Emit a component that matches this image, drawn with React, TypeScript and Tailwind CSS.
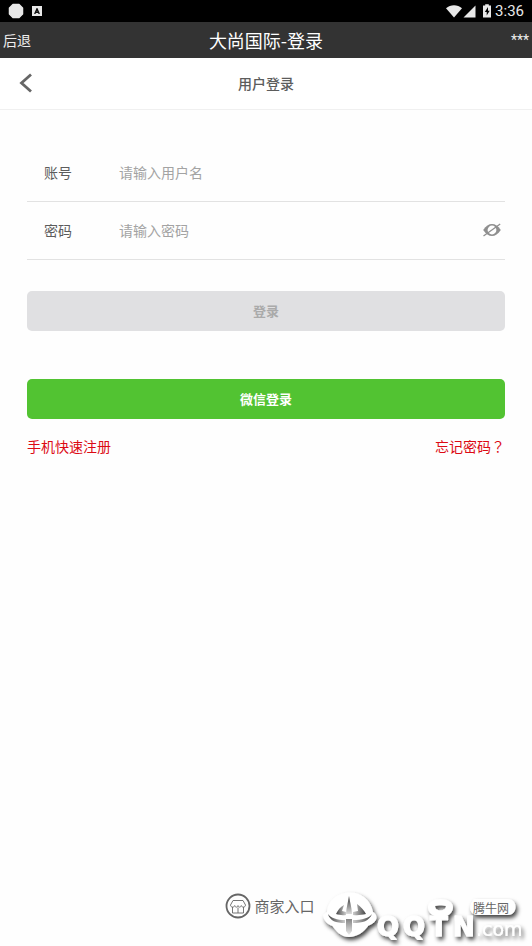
import React, { useState } from 'react';

const StatusBar: React.FC = () => (
  <div className="flex h-[22px] items-center justify-between bg-black px-2 text-[#e8e8e8]">
    <div className="flex items-center gap-2">
      <svg viewBox="0 0 16 16" className="h-4 w-4" fill="#e8e8e8">
        <path d="M5 1.500h6L14.500 5v6L11 14.500H5L1.500 11V5z" stroke="#e8e8e8" strokeWidth="1.500" strokeLinejoin="round" />
      </svg>
      <span className="flex h-[10px] w-[10px] items-center justify-center bg-[#e8e8e8]">
        <svg viewBox="0 0 6 6" className="h-[6px] w-[6px]" fill="none" stroke="#111" strokeWidth="1.400">
          <path d="M.7 6 3 .8 5.300 6M1.500 4.300h3" />
        </svg>
      </span>
    </div>
    <div className="flex items-center gap-1">
      <svg viewBox="0 0 46 14" className="h-[14px] w-[46px]" fill="#e8e8e8">
        <path d="M1 4.300C5.500.3 12.500.3 17 4.300L9 13.500z" />
        <path d="M30.500 1.500v12h-12z" />
        <path d="M38 1.500h2.200V.300h3.600v1.200H46v12h-8z" />
        <path d="M43 3 39.800 8h1.900v3.600l3-4.900h-1.700z" fill="#000" />
      </svg>
      <span className="font-['Roboto',sans-serif] text-[15px] leading-5">3:36</span>
    </div>
  </div>
);

const StoreIcon: React.FC = () => (
  <svg viewBox="0 0 26 26" className="h-[26px] w-[26px]" fill="none" stroke="#666">
    <circle cx="13" cy="13" r="11.500" strokeWidth="1.800" />
    <path d="M8 7.500h10l2.500 4.500c0 2.500-3.500 2.800-4.200.6-.6 2-2.700 2-3.300 0-.6 2-2.700 2-3.300 0-.7 2.200-4.200 1.900-4.200-.6z" strokeWidth=".9" />
    <path d="M7.500 14v6h11v-6M13 14.500V20" strokeWidth=".9" />
  </svg>
);

const EyeOffIcon: React.FC = () => (
  <svg viewBox="0 0 20 14" className="h-[14px] w-5" fill="none" stroke="#8f8f8f">
    <path d="M1.200 7C4 2.800 6.800 1 10 1s6 1.800 8.800 6c-2.800 4.200-5.600 6-8.800 6S4 11.200 1.200 7z" fill="#8f8f8f" stroke="none" />
    <circle cx="10" cy="7" r="4.400" fill="#fefefe" stroke="none" />
    <path d="M1.500 13 18.200 1" strokeWidth="1.300" />
  </svg>
);

const Watermark: React.FC = () => (
  <svg
    viewBox="0 0 220 66"
    className="pointer-events-none absolute bottom-0 right-0 h-[66px] w-[220px]"
    role="img"
    aria-label="QQTN.com"
  >
    <defs>
      <filter id="wm-shadow" x="-10%" y="-10%" width="125%" height="135%">
        <feDropShadow dx="2" dy="3" stdDeviation="2" floodColor="#000" floodOpacity=".75" />
      </filter>
      <linearGradient id="wm-dark" x1="0" y1="0" x2="0" y2="1">
        <stop offset="0" stopColor="#333" />
        <stop offset="1" stopColor="#ddd" />
      </linearGradient>
      <linearGradient id="wm-left" x1="0" y1="0" x2="1" y2="0">
        <stop offset="0" stopColor="#444" />
        <stop offset="1" stopColor="#ccc" />
      </linearGradient>
      <linearGradient id="wm-right" x1="1" y1="0" x2="0" y2="0">
        <stop offset="0" stopColor="#444" />
        <stop offset="1" stopColor="#ccc" />
      </linearGradient>
    </defs>
    <g filter="url(#wm-shadow)" fill="#fff">
      <path d="M15 32C16 19 27 12.500 38 12.500S59 20 61 32c2 1 3.500 3 3.500 6-1 4-4 6-8 7.500C52 52 45 57 37 57S24 51 20.500 46C15 44 12 41 11 35z" />
      <g fontFamily="'DejaVu Sans', sans-serif" fontWeight="700" fontSize="26" stroke="#fff" strokeLinejoin="round">
        <text x="65" y="55.500">Q</text>
        <text x="91" y="55.500">Q</text>
        <text x="118" y="55.500">T</text>
        <text x="141" y="55.500">N</text>
      </g>
      <text x="164" y="55.500" fontFamily="'DejaVu Sans', sans-serif" fontSize="19">.com</text>
      <path fillRule="evenodd" d="M116 27c0-5 6-8 12.500-8S141 22 141 27c0 6-5 10-12.500 10S116 33 116 27zm7-1c0 6 11 6 11 0-3-1-8-1-11 0z" />
      <path d="M162 19h34c10 0 10 16 0 16h-30c-8 0-11-8-4-16z" />
    </g>
    {/* Face cut into the emblem */}
    <path d="M37 16 39.500 29l.5 5h-6l.5-5z" fill="url(#wm-dark)" />
    <path d="M24 34c2-4 4-7 8-9l-2 6 4 1v3c-4 .5-7 0-10-1z" fill="url(#wm-left)" />
    <path d="M54 34c-2-4-5-7-9-10l1 7-5 1v3c5 .5 9 0 13-1z" fill="url(#wm-right)" />
    <path d="M16 34c3 4 9 6 17 6v3c-9 0-15-2-17-9z" fill="url(#wm-left)" />
    <path d="M60 34c-3 4-10 6-19 6v3c10 0 16-2 19-9z" fill="url(#wm-right)" />
    <path d="M34 39h6v12l-3 4-3-4z" fill="url(#wm-dark)" opacity=".6" />
    <text x="161" y="33" fontFamily="'Noto Sans CJK SC', sans-serif" fontSize="12" fill="#666">腾牛网</text>
  </svg>
);

const App: React.FC = () => {
  const [account, setAccount] = useState('');
  const [password, setPassword] = useState('');
  const [showPassword, setShowPassword] = useState(false);

  return (
    <div className="relative flex min-h-screen flex-col bg-[#fefefe] font-['Noto_Sans_CJK_SC',sans-serif] text-sm text-[#5c5c5c]">
      <StatusBar />

      {/* Title bar of the web view */}
      <div className="grid h-9 grid-cols-[1fr_auto_1fr] items-center bg-[#333] px-[3px] text-[#eee]">
        <button type="button" className="justify-self-start">后退</button>
        <h1 className="text-lg text-white">大尚国际-登录</h1>
        <button type="button" className="justify-self-end font-['Roboto',sans-serif]">***</button>
      </div>

      {/* Page header */}
      <header className="grid h-[52px] grid-cols-[1fr_auto_1fr] items-center border-b border-[#f0f0f0] bg-white px-[18px] pb-[2px]">
        <button type="button" aria-label="返回" className="justify-self-start">
          <svg viewBox="0 0 16 20" className="h-5 w-4" fill="none" stroke="#666" strokeWidth="2.800">
            <path d="M13 1.500 3.500 10l9.500 8.500" />
          </svg>
        </button>
        <h2 className="font-medium">用户登录</h2>
      </header>

      <main className="px-[27px] pt-[34px]">
        <form onSubmit={(e) => e.preventDefault()}>
          <div className="flex h-[58px] items-center border-b border-[#e2e2e2] pb-[2px] pl-[17px]">
            <label htmlFor="account" className="w-[75px]">账号</label>
            <input
              id="account"
              type="text"
              value={account}
              onChange={(e) => setAccount(e.target.value)}
              placeholder="请输入用户名"
              className="min-w-0 flex-1 bg-transparent outline-none placeholder:text-[#a3a3a3]"
            />
          </div>
          <div className="flex h-[58px] items-center border-b border-[#e2e2e2] pb-[2px] pl-[17px] pr-[3px]">
            <label htmlFor="password" className="w-[75px]">密码</label>
            <input
              id="password"
              type={showPassword ? 'text' : 'password'}
              value={password}
              onChange={(e) => setPassword(e.target.value)}
              placeholder="请输入密码"
              className="min-w-0 flex-1 bg-transparent outline-none placeholder:text-[#a3a3a3]"
            />
            <button type="button" aria-label="显示密码" onClick={() => setShowPassword(!showPassword)}>
              <EyeOffIcon />
            </button>
          </div>

          <button type="submit" className="mt-[31px] h-10 w-full rounded-[5px] bg-[#e0e0e2] text-[13px] font-bold text-[#aaa]">
            登录
          </button>
          <button type="button" className="mt-12 h-10 w-full rounded-[5px] bg-[#52c332] text-[13px] font-bold text-white">
            微信登录
          </button>
        </form>

        <div className="mt-[17px] flex justify-between leading-5 text-[#dc0a14]">
          <a href="#register">手机快速注册</a>
          <a href="#forgot">忘记密码<span className="font-['Noto_Sans_CJK_TC',sans-serif]">？</span></a>
        </div>
      </main>

      <footer className="mt-auto flex justify-center pb-[27px] pl-2">
        <a href="#merchant" className="flex items-center gap-[3px] text-[15px] leading-6 text-[#666]">
          <StoreIcon />
          商家入口
        </a>
      </footer>

      <Watermark />
    </div>
  );
};

export default App;
